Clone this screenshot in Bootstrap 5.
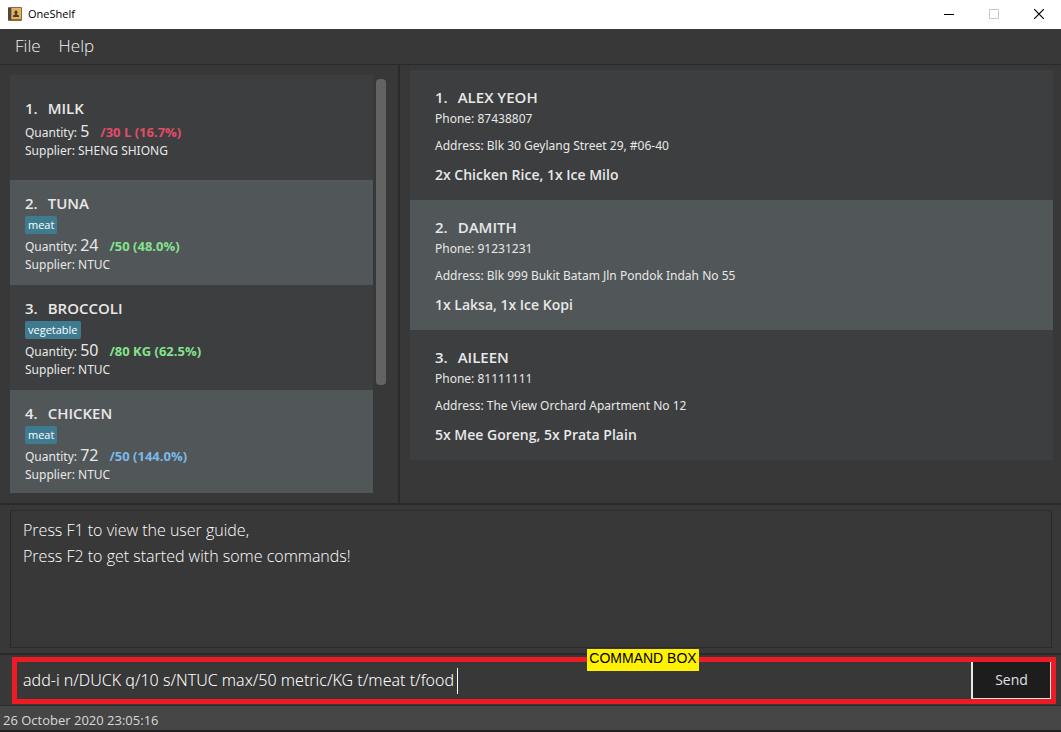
<!DOCTYPE html>
<html lang="en">
<head>
<meta charset="utf-8">
<meta name="viewport" content="width=device-width, initial-scale=1">
<title>OneShelf</title>
<link href="https://cdn.jsdelivr.net/npm/bootstrap@5.3.0/dist/css/bootstrap.min.css" rel="stylesheet">
<style>
  body { font-family: "Open Sans", "Noto Sans", sans-serif; font-size: 12px; line-height: 18px; color: #e8e8e8; background: #383838; }
  .titlebar { height: 29px; background: #fff; color: #000; padding: 0 0 2px 8px; font-size: 11px; gap: 6px; }
  .winbtn { width: 45px; height: 27px; border: 0; background: none; padding: 0; }
  .menubar { height: 36px; border-bottom: 1px solid #2a2a2a; padding-left: 15px; gap: 18px; }
  .menubar a { font-size: 17px; line-height: 34px; font-weight: 300; color: #f0f0f0; }
  .split { border-bottom: 2px solid #2a2a2a; }
  .stock-pane { flex: 0 0 400px; border-right: 2px solid #2a2a2a; padding: 10px 12px 10px 10px; }
  .stock-list, .order-list { font-family: "Noto Sans", "Open Sans", sans-serif; }
  .stock-list li { height: 105px; padding: 1px 15px 0; background: #3c3e3f; }
  .order-list li { height: 130px; padding: 1px 25px 0; background: #3c3e3f; }
  .stock-list li:nth-child(even), .order-list li:nth-child(even) { background: #515658; }
  .thumb { width: 10px; height: 306px; margin: 4px 0 0 3px; border-radius: 4px; background: #636363; }
  .order-pane { padding: 5px 8px 0 10px; }
  .item-title { font-family: "Open Sans", sans-serif; font-size: 15px; line-height: 24px; font-weight: 600; margin: 0; display: flex; gap: 10px; }
  .order-list .item-title { margin-bottom: 1px; }
  .tag { align-self: flex-start; background: #3e7b91; color: #fff; font-family: "Open Sans", sans-serif; font-size: 11px; line-height: 18px; padding: 0 3px; margin-top: 1px; border-radius: 2px; }
  .qty { height: 20px; margin-top: 2px; }
  .qty b { font-family: "Open Sans", sans-serif; font-size: 13px; }
  .amount { font-size: 16px; font-weight: 400; margin-right: 11px; }
  .low { color: #e54b68; } .ok { color: #85e28d; } .over { color: #7abaea; }
  .addr { margin-top: 9px; }
  .dishes { font-family: "Open Sans", sans-serif; font-size: 14px; line-height: 22px; margin-top: 9px; font-weight: 600; }
  .result { border-bottom: 2px solid #2a2a2a; padding: 5px 9px 5px 10px; height: 150px; }
  .result-box { border: 1px solid #2a2a2a; padding: 6px 12px; font-size: 16px; line-height: 26px; font-weight: 300; color: #fff; height: 138px; }
  .command { border-bottom: 1px solid #2a2a2a; padding: 2px 5px 1px 12px; height: 51px; }
  .command form { border: 5px solid #ed1c24; height: 47px; }
  .command input { width: 440px; border: 0; outline: 0; background: transparent; color: #fff; font-family: "Noto Sans", "Open Sans", sans-serif; font-size: 16px; font-weight: 300; padding: 0 0 1px 6px; }
  .caret { width: 1px; height: 26px; background: #fff; }
  .send { width: 80px; background: #1d1d1d; color: #e0e0e0; border: solid #e8e8e8; border-width: 0 1px 1px 2px; font-size: 14px; padding: 0; }
  .callout { position: absolute; left: 587px; top: -6px; background: #fff200; color: #000; font: 14px/18px "Liberation Sans", Arial, sans-serif; width: 112px; height: 22px; text-align: center; }
  .statusbar { background: #454545; height: 26px; border-bottom: 2px solid #222; padding: 4px 3px 0; font-size: 13px; line-height: 20px; color: #d8d8d8; }
</style>
</head>
<body>
<div class="d-flex flex-column vh-100">
  <header class="titlebar d-flex align-items-center">
    <svg width="14" height="14" viewBox="0 0 14 14" aria-hidden="true"><rect width="14" height="14" rx="1" fill="#8d6a35"/><rect x="3" y="1" width="10" height="11" fill="#e0b266"/><path d="M0 1h3v12H0z" fill="#54453c"/><path d="M3 1h1v11H3z" fill="#b98b4a"/><path d="M5 10V8.500l2-1V7c-1-1-.8-3.500 1-3.500S10 6 9 7v.5l2 1V10z" fill="#4f3d29"/></svg>
    <span class="me-auto">OneShelf</span>
    <div class="d-flex">
      <button class="winbtn" aria-label="Minimize"><svg width="10" height="10" class="d-block mx-auto"><path d="M0 5.500h10" stroke="#000"/></svg></button>
      <button class="winbtn" aria-label="Maximize" disabled><svg width="10" height="10" class="d-block mx-auto"><path d="M.5.5h9v9h-9z" fill="none" stroke="#c9c9c9"/></svg></button>
      <button class="winbtn" aria-label="Close"><svg width="10" height="10" class="d-block mx-auto"><path d="M0 0l10 10M10 0L0 10" stroke="#000" stroke-width="1.200"/></svg></button>
    </div>
  </header>
  <nav class="menubar d-flex">
    <a href="#" class="text-decoration-none">File</a>
    <a href="#" class="text-decoration-none">Help</a>
  </nav>
  <main class="split d-flex flex-fill overflow-hidden">
    <section class="stock-pane d-flex" aria-label="Items">
      <ul class="stock-list list-unstyled mb-0 flex-fill overflow-hidden">
        <li class="d-flex flex-column justify-content-center">
          <h2 class="item-title"><span>1.</span><span>MILK</span></h2>
          <div class="qty">Quantity: <span class="amount">5</span><b class="low">/30 L (16.7%)</b></div>
          <div>Supplier: SHENG SHIONG</div>
        </li>
        <li class="d-flex flex-column justify-content-center">
          <h2 class="item-title"><span>2.</span><span>TUNA</span></h2>
          <span class="tag">meat</span>
          <div class="qty">Quantity: <span class="amount">24</span><b class="ok">/50 (48.0%)</b></div>
          <div>Supplier: NTUC</div>
        </li>
        <li class="d-flex flex-column justify-content-center">
          <h2 class="item-title"><span>3.</span><span>BROCCOLI</span></h2>
          <span class="tag">vegetable</span>
          <div class="qty">Quantity: <span class="amount">50</span><b class="ok">/80 KG (62.5%)</b></div>
          <div>Supplier: NTUC</div>
        </li>
        <li class="d-flex flex-column justify-content-center">
          <h2 class="item-title"><span>4.</span><span>CHICKEN</span></h2>
          <span class="tag">meat</span>
          <div class="qty">Quantity: <span class="amount">72</span><b class="over">/50 (144.0%)</b></div>
          <div>Supplier: NTUC</div>
        </li>
      </ul>
      <div class="thumb flex-shrink-0"></div>
    </section>
    <section class="order-pane flex-fill" aria-label="Orders">
      <ul class="order-list list-unstyled mb-0">
        <li class="d-flex flex-column justify-content-center">
          <h2 class="item-title"><span>1.</span><span>ALEX YEOH</span></h2>
          <div>Phone: 87438807</div>
          <div class="addr">Address: Blk 30 Geylang Street 29, #06-40</div>
          <div class="dishes">2x Chicken Rice, 1x Ice Milo</div>
        </li>
        <li class="d-flex flex-column justify-content-center">
          <h2 class="item-title"><span>2.</span><span>DAMITH</span></h2>
          <div>Phone: 91231231</div>
          <div class="addr">Address: Blk 999 Bukit Batam Jln Pondok Indah No 55</div>
          <div class="dishes">1x Laksa, 1x Ice Kopi</div>
        </li>
        <li class="d-flex flex-column justify-content-center">
          <h2 class="item-title"><span>3.</span><span>AILEEN</span></h2>
          <div>Phone: 81111111</div>
          <div class="addr">Address: The View Orchard Apartment No 12</div>
          <div class="dishes">5x Mee Goreng, 5x Prata Plain</div>
        </li>
      </ul>
    </section>
  </main>
  <section class="result">
    <div class="result-box">Press F1 to view the user guide,<br>Press F2 to get started with some commands!</div>
  </section>
  <section class="command position-relative">
    <form class="d-flex">
      <input type="text" aria-label="Command" value="add-i n/DUCK q/10 s/NTUC max/50 metric/KG t/meat t/food">
      <span class="caret align-self-center me-auto"></span>
      <button type="button" class="send">Send</button>
    </form>
    <span class="callout">COMMAND BOX</span>
  </section>
  <footer class="statusbar">26 October 2020 23:05:16</footer>
</div>
<script src="https://cdn.jsdelivr.net/npm/bootstrap@5.3.0/dist/js/bootstrap.bundle.min.js"></script>
</body>
</html>
